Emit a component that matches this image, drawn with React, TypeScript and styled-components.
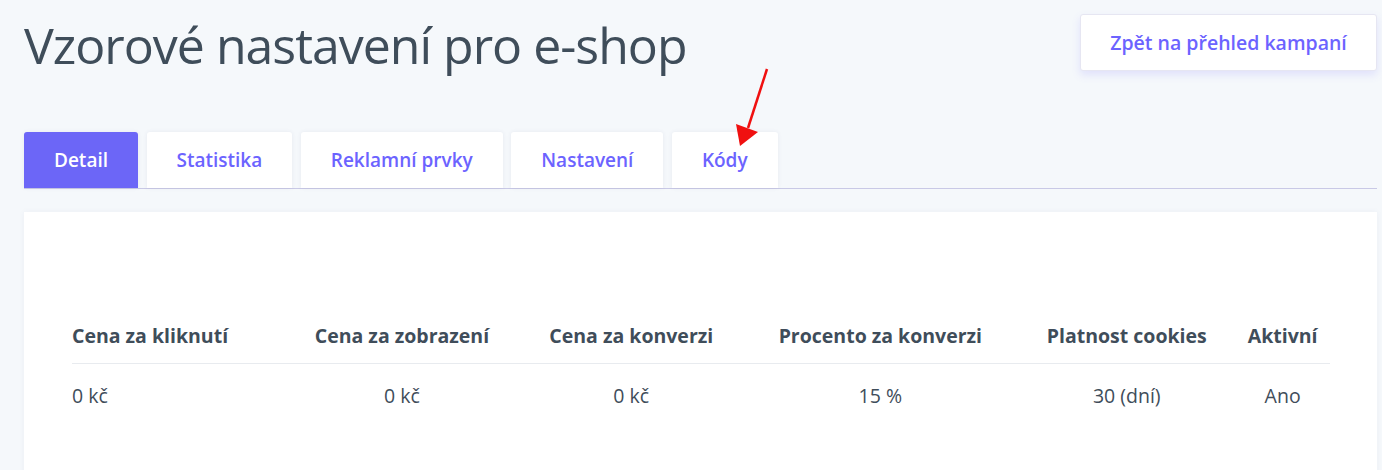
import { FC } from 'react';
import styled, { createGlobalStyle } from 'styled-components';

const GlobalStyle = createGlobalStyle`
  body {
    margin: 0;
    background-color: #f5f8fb;
    font-family: 'Open Sans', 'Noto Sans', sans-serif;
    color: #3f4d5a;
  }
`;

const Page = styled.div`
  position: relative;
  padding: 14px 5px 0 24px;
  height: 456px;
  overflow: hidden;
`;

const Header = styled.div`
  display: flex;
  justify-content: space-between;
  align-items: flex-start;
`;

const Title = styled.h1`
  margin: 0;
  font-size: 50px;
  font-weight: 400;
  line-height: 62px;
  letter-spacing: -1px;
  color: #3f4d5a;
`;

const BackButton = styled.button`
  width: 297px;
  height: 57px;
  background-color: #ffffff;
  border: 1px solid #e6e6f2;
  border-radius: 3px;
  box-shadow: 0 4px 8px rgba(108, 99, 255, 0.15);
  color: #6c63ff;
  font-family: inherit;
  font-size: 19.5px;
  font-weight: 600;
  cursor: pointer;
`;

const Tabs = styled.div`
  display: flex;
  gap: 8.5px;
  margin-top: 56px;
  border-bottom: 1px solid #c9c9e6;
`;

const Tab = styled.div<{ active?: boolean }>`
  height: 56px;
  padding: 0 30px;
  display: flex;
  align-items: center;
  border-radius: 3px 3px 0 0;
  font-size: 19px;
  font-weight: 600;
  background-color: ${({ active }) => (active ? '#6c66f7' : '#ffffff')};
  color: ${({ active }) => (active ? '#ffffff' : '#6c63ff')};
  box-shadow: 0 0 4px rgba(60, 60, 120, 0.08);
  cursor: pointer;
`;

const Panel = styled.div`
  margin-top: 23px;
  background-color: #ffffff;
  padding: 102px 47px 40px 48px;
  box-shadow: 0 0 6px rgba(60, 60, 120, 0.05);
  height: 300px;
`;

const Table = styled.table`
  width: 100%;
  border-collapse: collapse;
  font-size: 19.5px;
  color: #3f4d5a;
`;

const Th = styled.th<{ left?: boolean }>`
  text-align: ${({ left }) => (left ? 'left' : 'center')};
  font-weight: 700;
  padding: 8px 0 14px;
  border-bottom: 1px solid #e8ebef;
`;

const Td = styled.td<{ left?: boolean }>`
  text-align: ${({ left }) => (left ? 'left' : 'center')};
  font-weight: 400;
  padding: 18px 0;
`;

const Arrow = styled.svg`
  position: absolute;
  left: 730px;
  top: 66px;
`;

const columns = [
  { head: 'Cena za kliknutí', value: '0 kč' },
  { head: 'Cena za zobrazení', value: '0 kč' },
  { head: 'Cena za konverzi', value: '0 kč' },
  { head: 'Procento za konverzi', value: '15 %' },
  { head: 'Platnost cookies', value: '30 (dní)' },
  { head: 'Aktivní', value: 'Ano' },
];

const tabs = ['Detail', 'Statistika', 'Reklamní prvky', 'Nastavení', 'Kódy'];

const App: FC = () => (
  <>
    <GlobalStyle />
    <Page>
      <Header>
        <Title>Vzorové nastavení pro e-shop</Title>
        <BackButton>Zpět na přehled kampaní</BackButton>
      </Header>
      <Tabs>
        {tabs.map((t, i) => (
          <Tab key={t} active={i === 0}>
            {t}
          </Tab>
        ))}
      </Tabs>
      <Panel>
        <Table>
          <thead>
            <tr>
              {columns.map((c, i) => (
                <Th key={c.head} left={i === 0}>
                  {c.head}
                </Th>
              ))}
            </tr>
          </thead>
          <tbody>
            <tr>
              {columns.map((c, i) => (
                <Td key={c.head} left={i === 0}>
                  {c.value}
                </Td>
              ))}
            </tr>
          </tbody>
        </Table>
      </Panel>
      <Arrow width="50" height="90" viewBox="0 0 50 90">
        <line x1="37" y1="3" x2="18" y2="62" stroke="#f01010" strokeWidth="2.5" />
        <polygon points="6,58 28,66 10,80" fill="#f01010" />
      </Arrow>
    </Page>
  </>
);

export default App;
